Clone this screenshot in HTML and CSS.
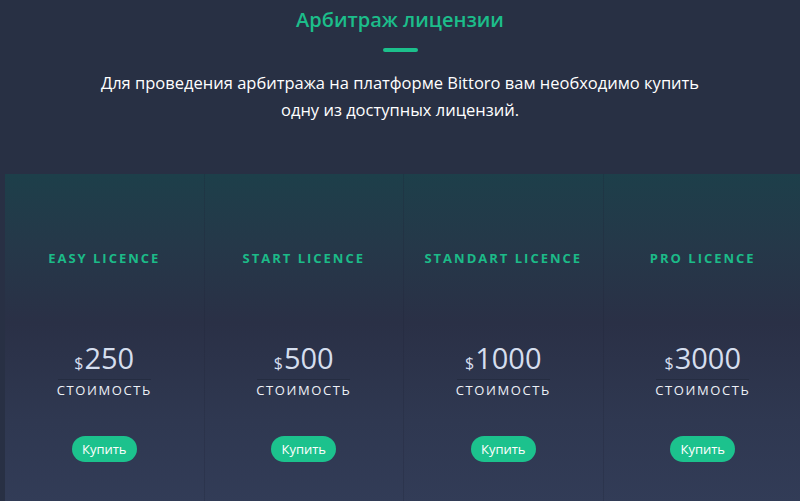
FILE: index.html
```html
<!DOCTYPE html>
<html lang="ru">
<head>
<meta charset="utf-8">
<title>Арбитраж лицензии</title>
<link rel="stylesheet" href="styles.css">
</head>
<body>
<section class="licenses">
  <header class="intro">
    <h1 class="title">Арбитраж лицензии</h1>
    <span class="title-bar"></span>
    <p class="lead">Для проведения арбитража на платформе Bittoro вам необходимо купить одну из доступных лицензий.</p>
  </header>
  <div class="cards">
    <div class="card">
      <h2 class="card-name">EASY LICENCE</h2>
      <div class="price"><span class="cur">$</span>250</div>
      <div class="price-label">СТОИМОСТЬ</div>
      <a class="buy" href="#">Купить</a>
    </div>
    <div class="card">
      <h2 class="card-name">START LICENCE</h2>
      <div class="price"><span class="cur">$</span>500</div>
      <div class="price-label">СТОИМОСТЬ</div>
      <a class="buy" href="#">Купить</a>
    </div>
    <div class="card">
      <h2 class="card-name">STANDART LICENCE</h2>
      <div class="price"><span class="cur">$</span>1000</div>
      <div class="price-label">СТОИМОСТЬ</div>
      <a class="buy" href="#">Купить</a>
    </div>
    <div class="card">
      <h2 class="card-name">PRO LICENCE</h2>
      <div class="price"><span class="cur">$</span>3000</div>
      <div class="price-label">СТОИМОСТЬ</div>
      <a class="buy" href="#">Купить</a>
    </div>
  </div>
</section>
</body>
</html>
```
FILE: styles.css
```css
html, body {
  margin: 0;
  padding: 0;
  height: 100%;
  overflow: hidden;
}
body {
  background: #283044;
  font-family: "Open Sans", "Liberation Sans", sans-serif;
  color: #ffffff;
}
.licenses {
  display: flex;
  flex-direction: column;
}
.intro {
  display: flex;
  flex-direction: column;
  align-items: center;
  padding-top: 5px;
}
.title {
  margin: 0;
  font-size: 20px;
  font-weight: 600;
  line-height: 30px;
  color: #1cbd8a;
}
.title-bar {
  display: block;
  width: 35px;
  height: 4px;
  border-radius: 2px;
  background: #1cc08c;
  margin-top: 13px;
}
.lead {
  margin: 17px 0 0;
  width: 640px;
  text-align: center;
  font-size: 16.5px;
  line-height: 27px;
  color: #ffffff;
}
.cards {
  display: grid;
  grid-template-columns: repeat(4, 199.5px);
  margin: 51px 0 0 5px;
}
.card {
  height: 330px;
  box-sizing: border-box;
  border-right: 1px solid rgba(30, 36, 54, 0.25);
  background: linear-gradient(180deg, #1d3f4a 0%, #253849 22%, #2a3046 45%, #2f3851 75%, #323c57 100%);
  display: flex;
  flex-direction: column;
  align-items: center;
}
.card-name {
  margin: 74px 0 0;
  font-size: 13px;
  font-weight: 700;
  letter-spacing: 2px;
  line-height: 20px;
  color: #1cbb88;
}
.price {
  margin-top: 75px;
  font-size: 29px;
  line-height: 30px;
  color: #d5deee;
  width: 93px;
  text-align: center;
  border-bottom: 1px solid rgba(20, 26, 40, 0.3);
  padding-bottom: 1px;
}
.cur {
  font-size: 16px;
  margin-right: 1px;
}
.price-label {
  margin-top: 0;
  font-size: 13px;
  letter-spacing: 1.6px;
  line-height: 20px;
  color: #eef1f7;
}
.buy {
  margin-top: 36px;
  display: flex;
  align-items: center;
  justify-content: center;
  width: 65px;
  height: 26px;
  border-radius: 13px;
  background: #1cc28d;
  color: #ffffff;
  font-size: 13px;
  text-decoration: none;
}
```
